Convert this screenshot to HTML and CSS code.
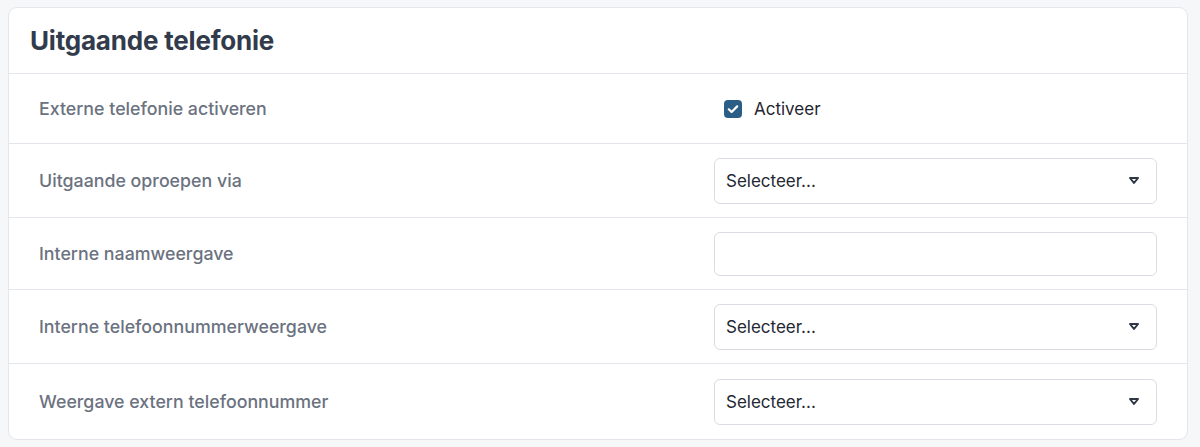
FILE: index.html
```html
<!DOCTYPE html>
<html lang="nl">
<head>
<meta charset="utf-8">
<title>Uitgaande telefonie</title>
<link rel="stylesheet" href="styles.css">
</head>
<body>
<section class="card">
  <header class="card-header">
    <h2 class="card-title">Uitgaande telefonie</h2>
  </header>
  <div class="row row-first">
    <div class="label">Externe telefonie activeren</div>
    <div class="control">
      <label class="check">
        <span class="check-box">
          <svg viewBox="0 0 18 18" width="18" height="18"><path d="M4.8 9.3l2.8 2.7 5.6-5.6" fill="none" stroke="#fff" stroke-width="2.2" stroke-linecap="round" stroke-linejoin="round"/></svg>
        </span>
        <span class="check-text">Activeer</span>
      </label>
    </div>
  </div>
  <div class="row">
    <div class="label">Uitgaande oproepen via</div>
    <div class="control">
      <div class="select"><span>Selecteer...</span>
        <svg class="caret" viewBox="0 0 12 9" width="12" height="9"><path d="M2 2h8L6 7z" fill="none" stroke="#2f3744" stroke-width="2" stroke-linejoin="round"/></svg>
      </div>
    </div>
  </div>
  <div class="row row-mid">
    <div class="label">Interne naamweergave</div>
    <div class="control">
      <div class="input"></div>
    </div>
  </div>
  <div class="row">
    <div class="label">Interne telefoonnummerweergave</div>
    <div class="control">
      <div class="select"><span>Selecteer...</span>
        <svg class="caret" viewBox="0 0 12 9" width="12" height="9"><path d="M2 2h8L6 7z" fill="none" stroke="#2f3744" stroke-width="2" stroke-linejoin="round"/></svg>
      </div>
    </div>
  </div>
  <div class="row row-last">
    <div class="label">Weergave extern telefoonnummer</div>
    <div class="control">
      <div class="select"><span>Selecteer...</span>
        <svg class="caret" viewBox="0 0 12 9" width="12" height="9"><path d="M2 2h8L6 7z" fill="none" stroke="#2f3744" stroke-width="2" stroke-linejoin="round"/></svg>
      </div>
    </div>
  </div>
</section>
</body>
</html>
```
FILE: styles.css
```css
* { box-sizing: border-box; }
html, body { height: 100%; }
body {
  margin: 0;
  padding: 7px 12px 8px 8px;
  background: #f6f7f9;
  font-family: Inter, "Noto Sans", sans-serif;
}
.card {
  background: #fff;
  border: 1px solid #e4e6eb;
  border-radius: 9px;
  overflow: hidden;
}
.card-header {
  height: 66px;
  border-bottom: 1px solid #e4e6eb;
  display: flex;
  align-items: center;
  padding: 0 21px;
}
.card-title {
  margin: 0;
  font-size: 26px;
  line-height: 1;
  font-weight: 700;
  color: #323b4b;
  letter-spacing: -0.2px;
}
.row {
  display: grid;
  grid-template-columns: 1fr 443px;
  align-items: center;
  padding: 0 30px;
  height: 74px;
  border-bottom: 1px solid #e4e6eb;
}
.row-first { height: 70px; }
.row-mid { height: 72px; }
.row-last { border-bottom: none; height: 75px; }
.label {
  font-size: 17.8px;
  font-weight: 500;
  color: #6b7280;
}
.control { display: flex; align-items: center; }
.check {
  display: flex;
  align-items: center;
  gap: 12px;
  padding-left: 10px;
}
.check-box {
  width: 18px;
  height: 18px;
  border-radius: 4px;
  background: #2b5e86;
  display: flex;
}
.check-text {
  font-size: 17px;
  color: #1f2430;
}
.select, .input {
  width: 100%;
  height: 46px;
  border: 1px solid #d9dce2;
  border-radius: 6px;
  background: #fff;
}
.input { height: 44px; }
.select {
  display: flex;
  align-items: center;
  justify-content: space-between;
  padding: 0 16px 0 11px;
  font-size: 17px;
  color: #232833;
}
.caret { display: block; }
```
